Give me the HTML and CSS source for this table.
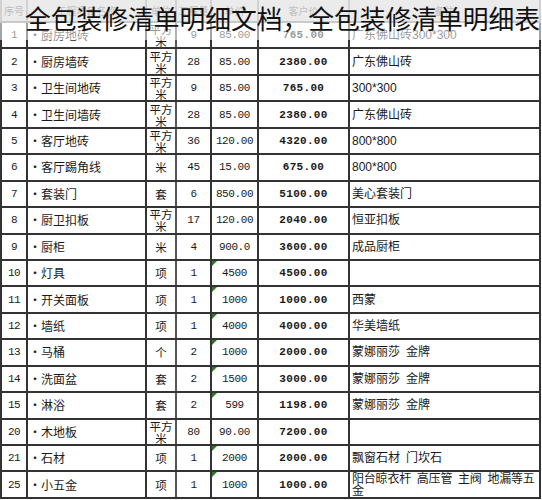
FILE: index.html
```html
<!DOCTYPE html>
<html lang="zh">
<head>
<meta charset="utf-8">
<link rel="stylesheet" href="styles.css">
</head>
<body>
<div class="sheet">
  <table class="grid">
    <colgroup>
      <col class="c-no"><col class="c-name"><col class="c-unit"><col class="c-qty"><col class="c-price"><col class="c-total"><col class="c-note">
    </colgroup>
    <thead>
      <tr class="head">
        <th>序号</th><th>工程项目名称</th><th>单位</th><th>工程量</th><th>单价</th><th>客户价</th><th>备注</th>
      </tr>
    </thead>
    <tbody>
      <tr><td class="no">1</td><td class="name">・厨房地砖</td><td class="unit">平方米</td><td class="num">9</td><td class="num">85.00</td><td class="total">765.00</td><td class="note">广东佛山砖300*300</td></tr>
      <tr><td class="no">2</td><td class="name">・厨房墙砖</td><td class="unit">平方米</td><td class="num">28</td><td class="num">85.00</td><td class="total">2380.00</td><td class="note">广东佛山砖</td></tr>
      <tr><td class="no">3</td><td class="name">・卫生间地砖</td><td class="unit">平方米</td><td class="num">9</td><td class="num">85.00</td><td class="total">765.00</td><td class="note">300*300</td></tr>
      <tr><td class="no">4</td><td class="name">・卫生间墙砖</td><td class="unit">平方米</td><td class="num">28</td><td class="num">85.00</td><td class="total">2380.00</td><td class="note">广东佛山砖</td></tr>
      <tr><td class="no">5</td><td class="name">・客厅地砖</td><td class="unit">平方米</td><td class="num">36</td><td class="num">120.00</td><td class="total">4320.00</td><td class="note">800*800</td></tr>
      <tr><td class="no">6</td><td class="name">・客厅踢角线</td><td class="unit">米</td><td class="num">45</td><td class="num">15.00</td><td class="total">675.00</td><td class="note">800*800</td></tr>
      <tr><td class="no">7</td><td class="name">・套装门</td><td class="unit">套</td><td class="num">6</td><td class="num">850.00</td><td class="total">5100.00</td><td class="note">美心套装门</td></tr>
      <tr><td class="no">8</td><td class="name">・厨卫扣板</td><td class="unit">平方米</td><td class="num">17</td><td class="num">120.00</td><td class="total">2040.00</td><td class="note">恒亚扣板</td></tr>
      <tr><td class="no">9</td><td class="name">・厨柜</td><td class="unit">米</td><td class="num">4</td><td class="num">900.0</td><td class="total">3600.00</td><td class="note">成品厨柜</td></tr>
      <tr><td class="no">10</td><td class="name">・灯具</td><td class="unit">项</td><td class="num">1</td><td class="num flag">4500</td><td class="total">4500.00</td><td class="note"></td></tr>
      <tr><td class="no">11</td><td class="name">・开关面板</td><td class="unit">项</td><td class="num">1</td><td class="num flag">1000</td><td class="total">1000.00</td><td class="note">西蒙</td></tr>
      <tr><td class="no">12</td><td class="name">・墙纸</td><td class="unit">项</td><td class="num">1</td><td class="num flag">4000</td><td class="total">4000.00</td><td class="note">华美墙纸</td></tr>
      <tr><td class="no">13</td><td class="name">・马桶</td><td class="unit">个</td><td class="num">2</td><td class="num flag">1000</td><td class="total">2000.00</td><td class="note">蒙娜丽莎&ensp;金牌</td></tr>
      <tr><td class="no">14</td><td class="name">・洗面盆</td><td class="unit">套</td><td class="num">2</td><td class="num flag">1500</td><td class="total">3000.00</td><td class="note">蒙娜丽莎&ensp;金牌</td></tr>
      <tr><td class="no">15</td><td class="name">・淋浴</td><td class="unit">套</td><td class="num">2</td><td class="num flag">599</td><td class="total">1198.00</td><td class="note">蒙娜丽莎&ensp;金牌</td></tr>
      <tr><td class="no">20</td><td class="name">・木地板</td><td class="unit">平方米</td><td class="num">80</td><td class="num">90.00</td><td class="total">7200.00</td><td class="note"></td></tr>
      <tr><td class="no">21</td><td class="name">・石材</td><td class="unit">项</td><td class="num">1</td><td class="num flag">2000</td><td class="total">2000.00</td><td class="note">飘窗石材&ensp;门坎石</td></tr>
      <tr><td class="no">25</td><td class="name">・小五金</td><td class="unit">项</td><td class="num">1</td><td class="num flag">1000</td><td class="total">1000.00</td><td class="note two">阳台晾衣杆&ensp;高压管&ensp;主阀&ensp;地漏等五<br>金</td></tr>
    </tbody>
  </table>
  <div class="band">
    <h1 class="title">全包装修清单明细文档，全包装修清单明细表</h1>
  </div>
</div>
</body>
</html>
```

FILE: styles.css
```css
html, body {
  margin: 0;
  padding: 0;
  background: #ffffff;
}

.sheet {
  position: relative;
  width: 542px;
  height: 500px;
  overflow: hidden;
  background: #ffffff;
}

.grid {
  border-collapse: collapse;
  table-layout: fixed;
  width: 540px;
  font-family: "Noto Sans CJK SC", sans-serif;
  font-size: 12px;
  line-height: 14px;
  color: #1a1a1a;
}

.c-no { width: 26px; }
.c-name { width: 119px; }
.c-unit { width: 30px; }
.c-qty { width: 35px; }
.c-price { width: 47px; }
.c-total { width: 91px; }
.c-note { width: 191px; }

.grid th,
.grid td {
  border: 2px solid #333333;
  padding: 0;
  vertical-align: middle;
  overflow: hidden;
  white-space: nowrap;
}

.grid td.unit {
  border-left-color: #555555;
  border-right-color: #555555;
  overflow: visible;
}

.head {
  height: 22px;
}

.head th {
  background: #d2d2d2;
  color: #6e6e6e;
  font-weight: 400;
  font-size: 10px;
  line-height: 12px;
  border-top: none;
  border-left-color: #9a9a9a;
  border-right-color: #9a9a9a;
  border-bottom-color: #888888;
}

.grid tbody tr {
  height: 26.44px;
}

.grid tbody td {
  height: 24px;
}

.no {
  text-align: center;
  font-family: "Liberation Mono", monospace;
  font-size: 11px;
  letter-spacing: -0.5px;
}

.name {
  padding-left: 1px !important;
  text-align: left;
  font-size: 12px;
}

.unit {
  text-align: center;
  white-space: normal !important;
  line-height: 12px !important;
  font-size: 11.5px;
}

.num {
  text-align: center;
  font-family: "Liberation Mono", monospace;
  font-size: 11px;
  letter-spacing: -0.4px;
}

.flag {
  position: relative;
}

.flag::before {
  content: "";
  position: absolute;
  left: 0;
  top: 0;
  width: 0;
  height: 0;
  border-top: 5px solid #2f7a2a;
  border-right: 5px solid transparent;
}

.total {
  text-align: center;
  font-family: "Liberation Mono", monospace;
  font-weight: 700;
  font-size: 11px;
  letter-spacing: 0.3px;
}

.note {
  text-align: left;
  padding-left: 2px !important;
  font-family: "Liberation Sans", "Noto Sans CJK SC", sans-serif;
  font-size: 12px;
}

.note.two {
  line-height: 12px;
  vertical-align: top;
  padding-top: 1px !important;
  letter-spacing: -0.2px;
}

.band {
  position: absolute;
  left: 0;
  top: 0;
  width: 542px;
  height: 40px;
  background: rgba(255, 255, 255, 0.55);
}

.title {
  margin: 0;
  padding: 5px 0 0 25px;
  font-family: "Noto Sans CJK SC", sans-serif;
  font-weight: 400;
  font-size: 25.75px;
  line-height: 25.75px;
  color: #111111;
  white-space: nowrap;
}
```
